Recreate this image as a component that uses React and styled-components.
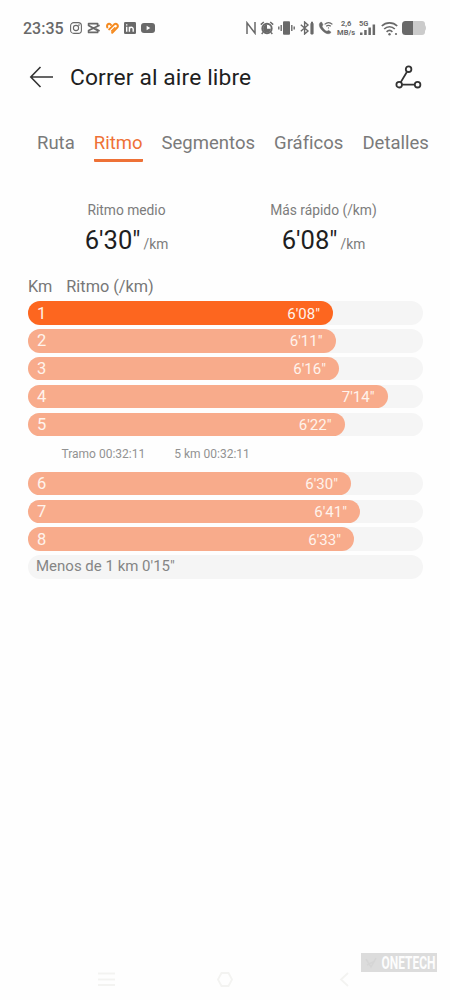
import React from "react";
import styled, { createGlobalStyle } from "styled-components";

const GlobalStyle = createGlobalStyle`
  * {
    box-sizing: border-box;
  }

  body {
    margin: 0;
    background: #fefefe;
    font-family: Roboto, "Liberation Sans", sans-serif;
    color: #1f1f1f;
  }
`;

const Screen = styled.div`
  display: flex;
  flex-direction: column;
  width: 450px;
  height: 1000px;
  overflow: hidden;
  background: #fefefe;
`;

const StatusBar = styled.div`
  display: flex;
  justify-content: space-between;
  align-items: center;
  height: 56px;
  padding: 0 23px;
  color: #696969;

  svg {
    display: block;
    flex: none;
  }
`;

const StatusGroup = styled.div`
  display: flex;
  align-items: center;
  gap: ${({ gap }) => gap}px;
`;

const Clock = styled.span`
  width: 41px;
  margin-right: 1px;
  padding-top: 1px;
  font-size: 16px;
  font-weight: 500;
  line-height: 20px;
  white-space: nowrap;
`;

const Speed = styled.div`
  width: 18px;
  font-size: 7.5px;
  font-weight: 700;
  line-height: 9px;
  text-align: center;
  white-space: nowrap;
`;

const Header = styled.header`
  display: flex;
  align-items: center;
  height: 42px;
  padding: 0 28px 0 29px;
`;

const Title = styled.h1`
  flex: 1;
  margin: 0 0 0 16px;
  padding-top: 2px;
  font-size: 22.8px;
  font-weight: 400;
  line-height: 30px;
  letter-spacing: 0.12px;
`;

const Tabs = styled.nav`
  display: flex;
  gap: 19px;
  margin-top: 32px;
  padding-left: 37px;
  white-space: nowrap;
`;

const Tab = styled.div`
  height: 32px;
  font-size: 18.5px;
  line-height: 26px;
  letter-spacing: 0.01px;
  color: ${({ active }) => (active ? "#ee7136" : "#7a7a7a")};
  border-bottom: 3px solid ${({ active }) => (active ? "#ee7136" : "transparent")};
  border-radius: 1px;
`;

const Stats = styled.section`
  display: flex;
  margin-top: 38px;
  padding: 0 28px;
`;

const Stat = styled.div`
  display: flex;
  flex-direction: column;
  align-items: center;
  width: 197px;
`;

const StatLabel = styled.div`
  font-size: 13.8px;
  line-height: 20px;
  color: #7c7c7c;
`;

const StatValue = styled.div`
  margin-top: 3px;
  font-size: 25.6px;
  line-height: 34px;
  white-space: nowrap;

  small {
    margin-left: 3px;
    font-size: 13.8px;
    color: #7c7c7c;
  }
`;

const ColumnHeads = styled.div`
  display: flex;
  gap: 14px;
  margin: 16px 0 0 28px;
  font-size: 16.3px;
  line-height: 20px;
  color: #777;
`;

const Rows = styled.div`
  display: flex;
  flex-direction: column;
  gap: 4.6px;
  width: 395px;
  margin: ${({ top }) => top}px 0 0 28px;
`;

const Track = styled.div`
  display: flex;
  align-items: center;
  height: 23.3px;
  border-radius: 12px;
  background: #f5f5f5;
`;

const Bar = styled.div`
  display: flex;
  justify-content: space-between;
  align-items: center;
  height: 100%;
  padding: 1px 13px 0 9px;
  border-radius: 12px;
  background: ${({ best }) => (best ? "#fd661f" : "#f8ab8b")};
  color: #fff3ec;
  font-size: 16.5px;
  line-height: 20px;
`;

const Pace = styled.span`
  font-size: 15px;
`;

const Split = styled.div`
  display: flex;
  gap: 29px;
  margin: 9px 0 0 61.5px;
  font-size: 12px;
  line-height: 18px;
  color: #929292;
`;

const Rest = styled.span`
  padding-left: 8px;
  margin-top: -2px;
  font-size: 15px;
  line-height: 20px;
  color: #858585;
`;

const Footer = styled.footer`
  display: grid;
  grid-template-columns: 98px 119px 119px 1fr;
  grid-template-rows: 19px 28px;
  margin-top: auto;
`;

const Watermark = styled.svg`
  grid-column: 1 / -1;
  justify-self: end;
  margin-right: 13px;
  overflow: visible;
`;

const NavIcon = styled.svg`
  grid-row: 2;
  grid-column: ${({ $col }) => $col};
  fill: none;
  stroke: #f3f3f1;
  stroke-width: 1.8;
`;

const firstLaps = [
  { km: 1, pace: "6'08\"", width: 305, best: true },
  { km: 2, pace: "6'11\"", width: 307.5 },
  { km: 3, pace: "6'16\"", width: 311 },
  { km: 4, pace: "7'14\"", width: 359.5 },
  { km: 5, pace: "6'22\"", width: 316.5 },
];

const lastLaps = [
  { km: 6, pace: "6'30\"", width: 323 },
  { km: 7, pace: "6'41\"", width: 332 },
  { km: 8, pace: "6'33\"", width: 326 },
];

const tabs = ["Ruta", "Ritmo", "Segmentos", "Gráficos", "Detalles"];

const Lap = ({ lap }) => (
  <Track>
    <Bar best={lap.best} style={{ width: lap.width }}>
      <span>{lap.km}</span>
      <Pace>{lap.pace}</Pace>
    </Bar>
  </Track>
);

const AppIcons = () => (
  <>
    <svg width="12" height="12" viewBox="0 0 12 12" fill="none" stroke="currentColor" strokeWidth="1.1">
      <rect x="0.6" y="0.6" width="10.8" height="10.8" rx="3.2" />
      <circle cx="6" cy="6" r="2.6" />
      <circle cx="9" cy="3" r="0.3" />
    </svg>
    <svg width="13" height="12" viewBox="0 0 13 12" fill="none" stroke="currentColor" strokeWidth="1.7" strokeLinejoin="round">
      <path d="M12.6 3.2 L1.6 8.6 V10.4 H10.6 V8.6 L1.6 3.4 V1.6 H10.6 V3.6 M12.6 8.9 L9 7" />
    </svg>
    <svg width="13" height="12" viewBox="0 0 13 12" fill="none" stroke="#f58a1f" strokeWidth="2" strokeLinecap="round">
      <path d="M1.3 5.4 C0.4 3 2.2 1.2 4 2 L5 2.9" />
      <path d="M3.2 7.4 L8.2 2.4 C10.4 0.8 12.8 3 11.4 5.4 L6.2 10.8" />
      <path d="M5.6 9 L8.9 5.7" strokeWidth="1.5" />
    </svg>
    <svg width="12" height="12" viewBox="0 0 12 12">
      <rect width="12" height="12" rx="1.3" fill="currentColor" />
      <path d="M2.7 4.8 V9.8 M2.7 2.2 V3.6 M5.4 4.8 V9.8 M5.4 7.4 C5.4 4.6 9.2 4.6 9.2 7.2 V9.8" fill="none" stroke="#fefefe" strokeWidth="1.4" />
    </svg>
    <svg width="14" height="12" viewBox="0 0 14 12">
      <rect y="1" width="14" height="10" rx="3" fill="currentColor" />
      <path d="M5.6 3.8 L9.3 6 L5.6 8.2 Z" fill="#fefefe" />
    </svg>
  </>
);

const SystemIcons = () => (
  <>
    <svg width="10" height="14" viewBox="0 0 10 14" fill="none" stroke="currentColor" strokeWidth="1.5">
      <path d="M1 13 V1.8 L9 12.2 V1" />
    </svg>
    <svg width="14" height="14" viewBox="0 0 14 14">
      <circle cx="7" cy="7.5" r="4.7" fill="none" stroke="currentColor" strokeWidth="1.9" />
      <path d="M0.8 3.6 L3.8 1 M13.2 3.6 L10.2 1 M3 11.4 L1.7 13 M11 11.4 L12.3 13" stroke="currentColor" strokeWidth="1.5" />
      <path d="M7 7.8 V3.7 A3.9 3.9 0 1 0 10.9 7.8 Z" fill="currentColor" />
    </svg>
    <svg width="17" height="14" viewBox="0 0 17 14" stroke="currentColor" strokeWidth="1.4">
      <rect x="5" y="0.3" width="7" height="13.4" rx="1" fill="currentColor" stroke="none" />
      <path d="M3.2 4 V10 M0.8 5.5 V8.5 M13.8 4 V10 M16.2 5.5 V8.5" />
    </svg>
    <svg width="14" height="14" viewBox="0 0 14 14" fill="none" stroke="currentColor" strokeWidth="1.4">
      <path d="M0.8 3.8 L8 10 L4.6 13 V1 L8 4 L0.8 10.2" />
      <rect x="10.4" y="2" width="3.2" height="11.4" rx="0.8" fill="currentColor" stroke="none" />
      <path d="M11 1.4 H13" />
    </svg>
    <svg width="15" height="14" viewBox="0 0 15 14" fill="none" stroke="currentColor">
      <path d="M2.3 1.4 C0.6 3 1 6 4.2 9.4 C7.4 12.7 10.8 13.6 12.6 12 L12.9 10.9 L10.6 9.3 L9 10.3 C6.7 9.4 5 7.4 4.1 5.2 L5 3.7 L3.6 1.1 Z" fill="currentColor" strokeWidth="0.4" />
      <path d="M6.6 3.4 C9 1.2 12.2 1.2 14.4 3.4 M8.2 5.3 C9.6 4.1 11.4 4.1 12.8 5.3" strokeWidth="1.2" />
      <circle cx="10.5" cy="6.9" r="0.6" fill="currentColor" stroke="none" />
    </svg>
  </>
);

const App = () => {
  return (
    <>
      <GlobalStyle />
      <Screen>
        <StatusBar>
          <StatusGroup gap={5.2}>
            <Clock>23:35</Clock>
            <AppIcons />
          </StatusGroup>
          <StatusGroup gap={4.3}>
            <SystemIcons />
            <Speed>
              2,6
              <br />
              MB/s
            </Speed>
            <svg width="17" height="16" viewBox="0 0 17 16" fill="currentColor">
              <text x="0" y="6" fontSize="7.5" fontWeight="700">5G</text>
              <rect x="1" y="12.5" width="2.5" height="2.5" />
              <rect x="5.2" y="10" width="2.5" height="5" />
              <rect x="9.4" y="7.5" width="2.5" height="7.5" />
              <rect x="13.6" y="4.5" width="2.5" height="10.5" />
            </svg>
            <svg width="17" height="15" viewBox="0 0 17 15" fill="none" stroke="currentColor" strokeWidth="1.7">
              <path d="M0.8 5 C5 0.8 12 0.8 16.2 5 M3.2 8 C6.2 5 10.8 5 13.8 8 M5.6 10.8 C7.3 9.2 9.7 9.2 11.4 10.8" />
              <circle cx="8.5" cy="13.3" r="1.2" fill="currentColor" stroke="none" />
              <circle cx="15" cy="13" r="1.1" fill="currentColor" stroke="none" />
            </svg>
            <svg width="25" height="14" viewBox="0 0 25 14">
              <path d="M4 0 H20 Q23 0 23 3 V4 Q25 7 23 10 V11 Q23 14 20 14 H4 Z" fill="#cbcbcb" />
              <path d="M11 0 V14 H3.5 Q0 14 0 10.5 V3.5 Q0 0 3.5 0 Z" fill="currentColor" />
            </svg>
          </StatusGroup>
        </StatusBar>

        <Header>
          <svg width="25" height="22" viewBox="0 0 25 22" fill="none" stroke="#333" strokeWidth="1.6">
            <path d="M24 11 H2 M11.5 1 L1.8 11 L11.5 21" />
          </svg>
          <Title>Correr al aire libre</Title>
          <svg width="27" height="25" viewBox="0 0 27 25" fill="none" stroke="#333" strokeWidth="1.8">
            <circle cx="13.6" cy="4.2" r="2.8" />
            <circle cx="4.2" cy="19.7" r="2.8" />
            <circle cx="22.6" cy="19.7" r="2.8" />
            <path d="M12 6.8 L5.8 17.1 M7.1 19.7 H19.7" />
          </svg>
        </Header>

        <Tabs>
          {tabs.map((name) => (
            <Tab key={name} active={name === "Ritmo"}>{name}</Tab>
          ))}
        </Tabs>

        <Stats>
          <Stat>
            <StatLabel>Ritmo medio</StatLabel>
            <StatValue>6'30"<small>/km</small></StatValue>
          </Stat>
          <Stat>
            <StatLabel>Más rápido (/km)</StatLabel>
            <StatValue>6'08"<small>/km</small></StatValue>
          </Stat>
        </Stats>

        <ColumnHeads>
          <span>Km</span>
          <span>Ritmo (/km)</span>
        </ColumnHeads>

        <Rows top={4.4}>
          {firstLaps.map((lap) => <Lap key={lap.km} lap={lap} />)}
        </Rows>
        <Split>
          <span>Tramo 00:32:11</span>
          <span>5 km 00:32:11</span>
        </Split>
        <Rows top={8.4}>
          {lastLaps.map((lap) => <Lap key={lap.km} lap={lap} />)}
          <Track>
            <Rest>Menos de 1 km 0'15"</Rest>
          </Track>
        </Rows>

        <Footer>
          <Watermark width="76" height="19" viewBox="0 0 76 19">
            <rect width="76" height="19" fill="#dcdcdc" />
            <path d="M5 6 L10 14 L15 5 M6 12 L14 8" fill="none" stroke="#d5d5d5" strokeWidth="1.5" />
            <text x="20.5" y="16" fontSize="18" fontWeight="700" fill="#fdfdfd" textLength="54" lengthAdjust="spacingAndGlyphs">ONETECH</text>
          </Watermark>
          <NavIcon $col={1} width="116" height="16" viewBox="0 0 116 16">
            <path d="M98 1.5 H115 M98 7.5 H115 M98 13 H115" />
          </NavIcon>
          <NavIcon $col={3} width="16" height="16" viewBox="0 0 16 16">
            <path d="M4.5 1 H11.5 L15 7.5 L11.5 14 H4.5 L1 7.5 Z" />
          </NavIcon>
          <NavIcon $col={4} width="14" height="16" viewBox="0 0 14 16">
            <path d="M12 1 L5 7.5 L12 14" />
          </NavIcon>
        </Footer>
      </Screen>
    </>
  );
};

export default App;
